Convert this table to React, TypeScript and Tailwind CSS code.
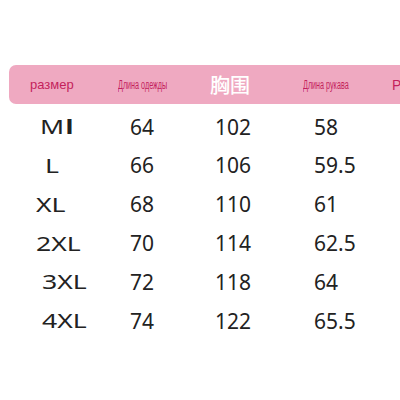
const rows = [
  { size: "M", indent: "pl-[40px]", a: "64", b: "102", c: "58" },
  { size: "L", indent: "pl-[45px]", a: "66", b: "106", c: "59.5" },
  { size: "XL", indent: "pl-[36px]", a: "68", b: "110", c: "61" },
  { size: "2XL", indent: "pl-[36px]", a: "70", b: "114", c: "62.5" },
  { size: "3XL", indent: "pl-[42px]", a: "72", b: "118", c: "64" },
  { size: "4XL", indent: "pl-[42px]", a: "74", b: "122", c: "65.5" },
];

const App = () => {
  return (
    <div className="w-[400px] h-[400px] bg-white overflow-hidden font-['Noto_Sans',sans-serif]">
      {/* pink header bar */}
      <div className="mt-[65px] ml-[9px] h-[39px] w-[420px] rounded-l-[7px] bg-[#efa9c1] flex items-center pl-[21px] text-[#c41f5c] font-['Liberation_Sans',sans-serif]">
        <span className="w-[88px] text-[13px] leading-none">размер</span>
        <span className="w-[92px] text-[12px] leading-none">
          <span className="inline-block origin-left scale-x-[0.6]">Длина одежды</span>
        </span>
        <span className="w-[93px] text-[20px] leading-none text-white font-medium font-['Noto_Sans_CJK_SC',sans-serif]">
          胸围
        </span>
        <span className="w-[89px] text-[12px] leading-none">
          <span className="inline-block origin-left scale-x-[0.6]">Длина рукава</span>
        </span>
        <span className="text-[14px] leading-none">Р</span>
      </div>

      {/* size rows */}
      <div className="mt-[4px] text-[#222222]">
        {rows.map((row) => (
          <div key={row.size} className="flex items-center h-[38.8px] text-[21px]">
            <div className={`w-[130px] ${row.indent} text-[19px]`}>
              <span className="inline-block origin-left scale-x-[1.4]">
                {row.size}
                {row.size === "M" && <span className="font-bold ml-[1px]">l</span>}
              </span>
            </div>
            <div className="w-[85px]">{row.a}</div>
            <div className="w-[99px]">{row.b}</div>
            <div>{row.c}</div>
          </div>
        ))}
      </div>
    </div>
  );
};

export default App;
